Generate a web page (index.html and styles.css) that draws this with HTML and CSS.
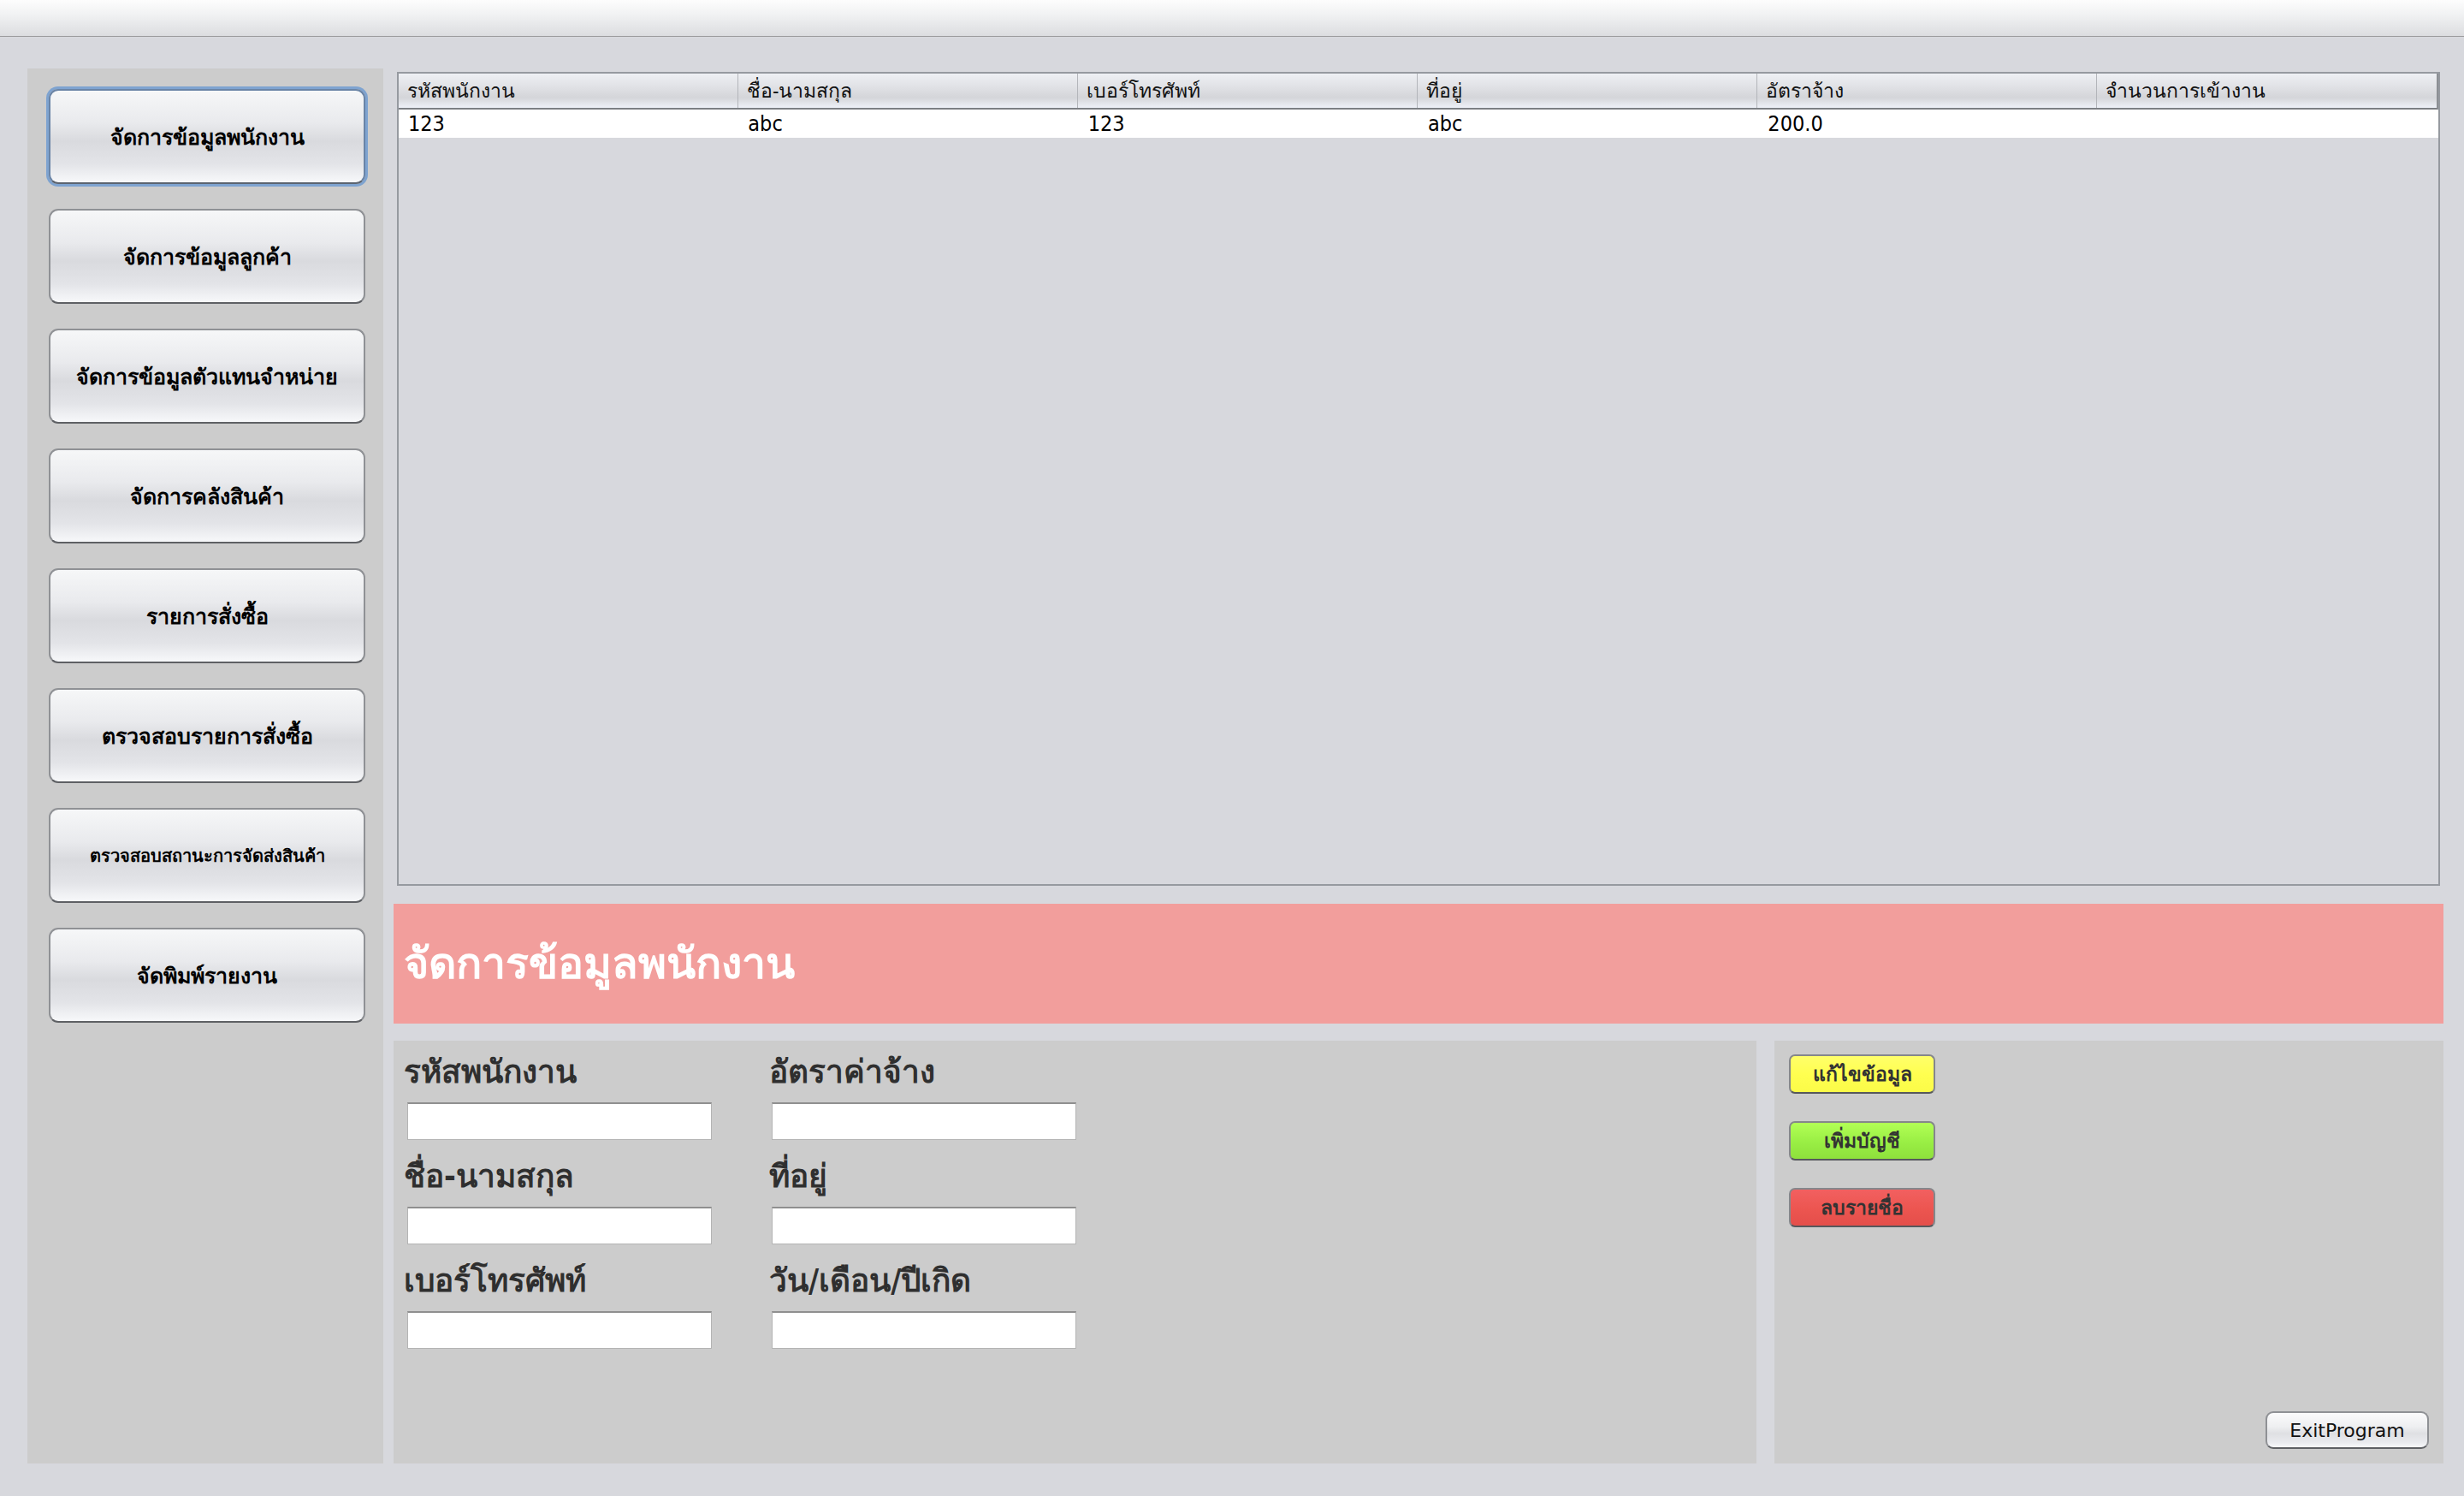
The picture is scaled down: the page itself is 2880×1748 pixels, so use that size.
FILE: index.html
```html
<!DOCTYPE html>
<html lang="th">
<head>
<meta charset="utf-8">
<title>จัดการข้อมูลพนักงาน</title>
<link rel="stylesheet" href="styles.css">
</head>
<body>
<div class="titlebar"></div>
<div class="main">
  <nav class="sidebar">
    <button class="navbtn focused">จัดการข้อมูลพนักงาน</button>
    <button class="navbtn">จัดการข้อมูลลูกค้า</button>
    <button class="navbtn">จัดการข้อมูลตัวแทนจำหน่าย</button>
    <button class="navbtn">จัดการคลังสินค้า</button>
    <button class="navbtn">รายการสั่งซื้อ</button>
    <button class="navbtn">ตรวจสอบรายการสั่งซื้อ</button>
    <button class="navbtn small">ตรวจสอบสถานะการจัดส่งสินค้า</button>
    <button class="navbtn">จัดพิมพ์รายงาน</button>
  </nav>
  <section class="content">
    <div class="table-wrap">
      <div class="thead">
        <div class="th">รหัสพนักงาน</div>
        <div class="th">ชื่อ-นามสกุล</div>
        <div class="th">เบอร์โทรศัพท์</div>
        <div class="th">ที่อยู่</div>
        <div class="th">อัตราจ้าง</div>
        <div class="th">จำนวนการเข้างาน</div>
      </div>
      <div class="trow">
        <div class="td">123</div>
        <div class="td">abc</div>
        <div class="td">123</div>
        <div class="td">abc</div>
        <div class="td">200.0</div>
        <div class="td"></div>
      </div>
    </div>
    <div class="banner">จัดการข้อมูลพนักงาน</div>
    <div class="bottom">
      <div class="formpanel">
        <div class="field">
          <label class="flabel">รหัสพนักงาน</label>
          <input class="finput" type="text">
        </div>
        <div class="field">
          <label class="flabel">อัตราค่าจ้าง</label>
          <input class="finput" type="text">
        </div>
        <div class="field">
          <label class="flabel">ชื่อ-นามสกุล</label>
          <input class="finput" type="text">
        </div>
        <div class="field">
          <label class="flabel">ที่อยู่</label>
          <input class="finput" type="text">
        </div>
        <div class="field">
          <label class="flabel">เบอร์โทรศัพท์</label>
          <input class="finput" type="text">
        </div>
        <div class="field">
          <label class="flabel">วัน/เดือน/ปีเกิด</label>
          <input class="finput" type="text">
        </div>
      </div>
      <div class="actionpanel">
        <button class="actbtn yellow">แก้ไขข้อมูล</button>
        <button class="actbtn green">เพิ่มบัญชี</button>
        <button class="actbtn red">ลบรายชื่อ</button>
        <button class="exitbtn">ExitProgram</button>
      </div>
    </div>
  </section>
</div>
</body>
</html>
```

FILE: styles.css
```css
* { box-sizing: border-box; }

html, body {
  margin: 0;
  padding: 0;
}

body {
  width: 2880px;
  height: 1748px;
  background: #d7d8dd;
  font-family: "DejaVu Sans", "Noto Sans", sans-serif;
  overflow: hidden;
}

.titlebar {
  height: 43px;
  background: linear-gradient(to bottom, #fdfdfd 0%, #f1f2f3 40%, #dcdde0 100%);
  border-bottom: 1px solid #9a9a9c;
}

.main {
  display: flex;
  gap: 12px;
  padding: 37px 24px 0 32px;
  height: 1667px;
}

.sidebar {
  width: 416px;
  height: 1630px;
  background: #cccccc;
  padding: 24px 21px 0 25px;
  display: flex;
  flex-direction: column;
  gap: 29px;
}

.navbtn {
  height: 111px;
  width: 370px;
  border: 2px solid #8f9195;
  border-bottom-color: #5e6064;
  border-radius: 11px;
  background: linear-gradient(to bottom, #f6f7f8 0%, #e9eaed 35%, #d9dade 55%, #e3e4e8 80%, #f7f8fa 100%);
  font-family: "DejaVu Sans", sans-serif;
  font-weight: bold;
  font-size: 25px;
  color: #000;
  padding: 0;
  cursor: pointer;
}

.navbtn.small { font-size: 20px; }

.navbtn.focused {
  box-shadow: 0 0 0 3px #7ea3d0;
  border-color: #6a84a6;
  border-bottom-color: #5b6470;
}

.content {
  flex: 1;
  display: flex;
  flex-direction: column;
}

.table-wrap {
  margin: 4px 4px 0 4px;
  height: 951px;
  border: 2px solid #969aa0;
  background: #d7d8dd;
}

.thead {
  display: grid;
  grid-template-columns: repeat(6, 1fr);
  height: 42px;
  background: linear-gradient(to bottom, #eef0f4 0%, #e0e1e5 40%, #d4d5d9 70%, #e6e8ee 90%, #eef1f8 100%);
  border-bottom: 2px solid #7c7f84;
  border-right: 2px solid #8c8f94;
}

.th {
  border-right: 1px solid #b3b5ba;
  padding-left: 10px;
  font-family: "DejaVu Sans Condensed", "DejaVu Sans", sans-serif;
  font-size: 23px;
  line-height: 40px;
  color: #111;
  white-space: nowrap;
  overflow: hidden;
}

.th:last-child { border-right: none; }

.trow {
  display: grid;
  grid-template-columns: repeat(6, 1fr);
  height: 33px;
  background: #ffffff;
}

.td {
  padding-left: 11px;
  font-family: "DejaVu Sans Condensed", "DejaVu Sans", sans-serif;
  font-size: 25px;
  line-height: 33px;
  color: #000;
}

.banner {
  margin-top: 21px;
  height: 140px;
  background: #f29e9c;
  color: #ffffff;
  font-family: "DejaVu Sans", sans-serif;
  font-weight: bold;
  font-size: 50px;
  line-height: 140px;
  padding-left: 12px;
}

.bottom {
  margin-top: 20px;
  height: 494px;
  display: flex;
  gap: 21px;
}

.formpanel {
  flex: 1;
  background: #cccccc;
  padding: 14px 0 0 12px;
  display: grid;
  grid-template-columns: 427px 400px;
  grid-auto-rows: 102px;
  row-gap: 20px;
  align-content: start;
}

.field {
  display: flex;
  flex-direction: column;
}

.flabel {
  height: 46px;
  line-height: 46px;
  margin-bottom: 12px;
  font-family: "DejaVu Sans Condensed", "DejaVu Sans", sans-serif;
  font-weight: bold;
  font-size: 37px;
  color: #2f2f2f;
  white-space: nowrap;
}

.finput {
  width: 356px;
  height: 45px;
  margin-left: 4px;
  border: 1px solid #b4b4b4;
  border-top: 2px solid #8f8f8f;
  background: #ffffff;
  padding: 0 6px;
  font-size: 22px;
  outline: none;
}

.field:nth-child(even) .finput { margin-left: 3px; }

.actionpanel {
  width: 782px;
  background: #cccccc;
  padding: 16px 17px 17px 17px;
  display: flex;
  flex-direction: column;
  align-items: flex-start;
  gap: 32px;
}

.actbtn {
  width: 171px;
  height: 46px;
  border: 2px solid #85878b;
  border-bottom-color: #56585c;
  border-radius: 7px;
  font-family: "DejaVu Sans Condensed", "DejaVu Sans", sans-serif;
  font-weight: bold;
  font-size: 23px;
  color: #333333;
  padding: 0;
  cursor: pointer;
}

.actbtn.yellow { background: linear-gradient(to bottom, #ffff6a 0%, #ffff50 50%, #fbfb48 100%); }
.actbtn.green { background: linear-gradient(to bottom, #b2ff55 0%, #99ee44 55%, #8ee03c 100%); }
.actbtn.red { background: linear-gradient(to bottom, #f26060 0%, #ec5550 55%, #e44e4a 100%); }

.exitbtn {
  margin-top: auto;
  align-self: flex-end;
  width: 191px;
  height: 44px;
  border: 2px solid #8f9195;
  border-bottom-color: #5e6064;
  border-radius: 9px;
  background: linear-gradient(to bottom, #fbfbfc 0%, #eeeff1 40%, #dfe0e3 60%, #e9eaee 85%, #f7f8fa 100%);
  font-family: "DejaVu Sans", sans-serif;
  font-size: 22px;
  color: #111;
  padding: 0;
  cursor: pointer;
}
```
